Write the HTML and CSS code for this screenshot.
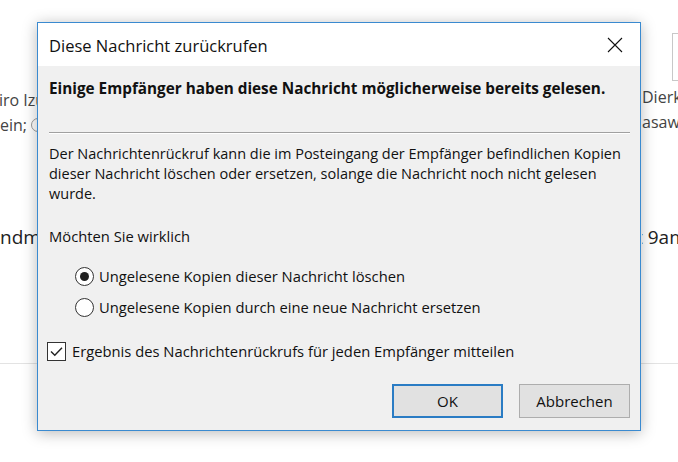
FILE: index.html
```html
<!DOCTYPE html>
<html lang="de">
<head>
<meta charset="utf-8">
<title>Diese Nachricht zurückrufen</title>
<link rel="stylesheet" href="styles.css">
</head>
<body>
<div class="app">
  <div class="bg-left">
    <div class="bg-name">iro Izumi</div>
    <div class="bg-line">ein; <span class="presence"></span></div>
    <div class="bg-big">ndmeeting</div>
  </div>
  <div class="bg-right">
    <div class="bg-box"></div>
    <div class="bg-name">Dierk</div>
    <div class="bg-line">asaw</div>
    <div class="bg-big">t 9am</div>
  </div>
  <div class="bg-rule"></div>
</div>

<div class="dialog">
  <div class="titlebar">
    <span class="title">Diese Nachricht zurückrufen</span>
    <svg class="close" width="16" height="16" viewBox="0 0 16 16"><path d="M1 1 L15 15 M15 1 L1 15" stroke="#111" stroke-width="1.1" fill="none"/></svg>
  </div>
  <div class="content">
    <p class="warn">Einige Empfänger haben diese Nachricht möglicherweise bereits gelesen.</p>
    <div class="sep"></div>
    <p class="desc">Der Nachrichtenrückruf kann die im Posteingang der Empfänger befindlichen Kopien dieser Nachricht löschen oder ersetzen, solange die Nachricht noch nicht gelesen wurde.</p>
    <p class="ask">Möchten Sie wirklich</p>
    <div class="options">
      <label class="opt"><span class="radio checked"></span>Ungelesene Kopien dieser Nachricht löschen</label>
      <label class="opt"><span class="radio"></span>Ungelesene Kopien durch eine neue Nachricht ersetzen</label>
    </div>
    <label class="check"><span class="box"><svg width="13" height="11" viewBox="0 0 13 11"><path d="M1 5.5 L4.8 9.3 L12 1.8" stroke="#222" stroke-width="1.4" fill="none"/></svg></span>Ergebnis des Nachrichtenrückrufs für jeden Empfänger mitteilen</label>
    <div class="buttons">
      <button class="btn default">OK</button>
      <button class="btn">Abbrechen</button>
    </div>
  </div>
</div>
</body>
</html>
```
FILE: styles.css
```css
html, body {
  margin: 0;
  padding: 0;
  background: #ffffff;
  width: 678px;
  height: 462px;
  overflow: hidden;
  font-family: "Open Sans", "Noto Sans", sans-serif;
}

.app {
  position: relative;
  width: 678px;
  height: 462px;
  overflow: hidden;
}

.bg-left {
  position: absolute;
  left: 0;
  top: 88px;
  width: 200px;
  color: #444;
}

.bg-right {
  position: absolute;
  left: 642px;
  top: 33px;
  width: 36px;
  color: #444;
  overflow: hidden;
}

.bg-name, .bg-line {
  font-size: 16px;
  line-height: 25px;
  white-space: nowrap;
}

.bg-left .bg-name { margin-left: -1px; }

.presence {
  display: inline-block;
  width: 12px;
  height: 12px;
  border: 1px solid #9a9a9a;
  border-radius: 50%;
  vertical-align: -1px;
}

.bg-big {
  margin-top: 87px;
  font-size: 19px;
  line-height: 24px;
  color: #222;
  white-space: nowrap;
}

.bg-box {
  width: 40px;
  height: 46px;
  margin-left: 30px;
  border: 1px solid #c8c8c8;
  margin-bottom: 4px;
}

.bg-right .bg-big { margin-top: 90px; margin-left: -6px; }

.bg-rule {
  position: absolute;
  left: 0;
  right: 0;
  top: 363px;
  height: 1px;
  background: #e3e3e3;
}

.dialog {
  position: absolute;
  left: 37px;
  top: 22px;
  width: 602px;
  height: 407px;
  border: 1px solid #3a8ad0;
  background: #f0f0f0;
  box-shadow: 0 2px 14px rgba(0, 0, 0, 0.28);
  display: flex;
  flex-direction: column;
}

.titlebar {
  height: 43px;
  background: #ffffff;
  display: flex;
  align-items: center;
  justify-content: space-between;
  padding: 0 17px 0 11px;
}

.title {
  font-size: 16.5px;
  color: #111;
  padding-top: 1px;
}

.close { display: block; }

.content {
  padding: 12px 10px 0 11px;
  font-size: 14.75px;
  line-height: 20px;
  color: #111;
  display: flex;
  flex-direction: column;
}

p { margin: 0; }

.warn {
  font-weight: bold;
  font-size: 15.3px;
}

.sep {
  margin-top: 34px;
  height: 0;
  border-top: 1px solid #a0a0a0;
  border-bottom: 1px solid #ffffff;
}

.desc {
  margin-top: 10px;
  font-size: 14.5px;
}

.ask {
  margin-top: 22px;
}

.options {
  margin-top: 20px;
  margin-left: 26px;
  display: flex;
  flex-direction: column;
  gap: 11px;
}

.opt, .check {
  display: flex;
  align-items: center;
  white-space: nowrap;
}

.radio {
  border: 1px solid #333;
  border-radius: 50%;
  background: #fff;
  margin-right: 5px;
  display: flex;
  align-items: center;
  justify-content: center;
  box-sizing: border-box;
  width: 19px;
  height: 19px;
}

.radio.checked::after {
  content: "";
  width: 9px;
  height: 9px;
  border-radius: 50%;
  background: #222;
}

.check {
  margin-top: 24px;
  margin-left: -2px;
}

.box {
  width: 19px;
  height: 19px;
  box-sizing: border-box;
  border: 1px solid #333;
  background: #fff;
  margin-right: 6px;
  display: flex;
  align-items: center;
  justify-content: center;
}

.box svg { display: block; }

.buttons {
  margin-top: 23px;
  display: flex;
  justify-content: flex-end;
  gap: 16px;
}

.btn {
  width: 111px;
  height: 34px;
  box-sizing: border-box;
  border: 1px solid #adadad;
  background: #e1e1e1;
  font-family: "Open Sans", "Noto Sans", sans-serif;
  font-size: 15px;
  color: #111;
  padding: 0;
}

.btn.default {
  width: 111px;
  border: 2px solid #2a7cc4;
}
```
